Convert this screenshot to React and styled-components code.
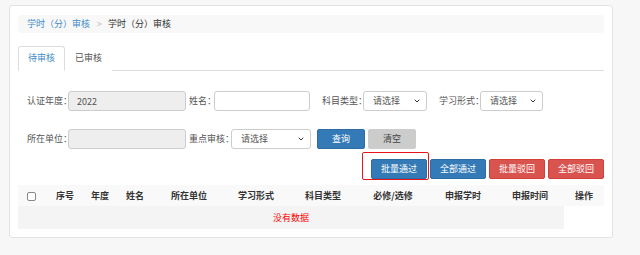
import React from 'react'
import styled, { createGlobalStyle } from 'styled-components'

const GlobalStyle = createGlobalStyle`
  html, body {
    margin: 0;
    padding: 0;
    background: #f7f7f7;
  }
  body {
    font-family: "Noto Sans CJK SC", "Noto Sans", sans-serif;
    font-size: 9px;
    line-height: 1.2;
    color: #555;
  }
`

const Page = styled.div`
  padding: 5px 0 0 9px;
  width: 604px;
`

const Panel = styled.div`
  background: #fff;
  border: 1px solid #e3e3e3;
  border-radius: 3px;
  padding: 9px 8px 8px 8px;
`

const Breadcrumb = styled.div`
  display: flex;
  align-items: center;
  height: 18px;
  padding-left: 9px;
  background: #f8f8f8;
  border-radius: 3px;
`

const Crumb = styled.span`
  color: ${(p) => (p.$active ? '#333' : '#428bca')};
`

const Sep = styled.span`
  color: #bbb;
  margin: 0 6px 0 7px;
`

const Tabs = styled.div`
  display: flex;
  margin-top: 13px;
  border-bottom: 1px solid #ddd;
  height: 24px;
`

const Tab = styled.div`
  display: flex;
  align-items: center;
  padding: 0 9px;
  height: 25px;
  box-sizing: border-box;
  color: ${(p) => (p.$active ? '#428bca' : '#555')};
  background: #fff;
  border: 1px solid ${(p) => (p.$active ? '#ddd' : 'transparent')};
  border-bottom-color: ${(p) => (p.$active ? '#fff' : 'transparent')};
  border-radius: 3px 3px 0 0;
`

const Form = styled.div`
  padding-left: 9px;
  margin-top: 20px;
`

const Row = styled.div`
  display: flex;
  align-items: center;
  height: 20px;
  margin-top: ${(p) => p.$gap || 0}px;
`

const Field = styled.div`
  display: flex;
  align-items: center;
  margin-right: ${(p) => p.$mr || 0}px;
`

const Label = styled.span`
  width: ${(p) => p.$w}px;
  white-space: nowrap;
  color: #555;
`

const Input = styled.input`
  box-sizing: border-box;
  width: ${(p) => p.$w}px;
  height: 20px;
  padding: 0 8px;
  border: 1px solid #ccc;
  border-radius: 3px;
  background: ${(p) => (p.disabled ? '#eee' : '#fff')};
  font: inherit;
  color: #555;
  outline: none;
`

const SelectBox = styled.div`
  position: relative;
  box-sizing: border-box;
  width: ${(p) => p.$w}px;
  height: 20px;
  display: flex;
  align-items: center;
  padding-left: 9px;
  border: 1px solid #ccc;
  border-radius: 3px;
  background: #fff;
  color: #555;
  svg {
    position: absolute;
    right: 6px;
    top: 7px;
  }
`

const Btn = styled.button`
  box-sizing: border-box;
  width: ${(p) => p.$w || 56}px;
  height: 20px;
  padding: 0;
  margin-left: ${(p) => p.$ml || 0}px;
  border: 1px solid ${(p) => p.$border};
  border-radius: 2px;
  background: ${(p) => p.$bg};
  color: ${(p) => p.$color || '#fff'};
  font: inherit;
  cursor: pointer;
`

const ActionBar = styled.div`
  display: flex;
  justify-content: flex-end;
  gap: 3px;
  margin-top: 10px;
`

const Marked = styled.span`
  position: relative;
  display: inline-flex;
  &::after {
    content: '';
    position: absolute;
    left: -9px;
    top: -7px;
    right: -2px;
    bottom: -1px;
    border: 1px solid #e8141a;
    border-radius: 2px;
  }
`

const Table = styled.table`
  margin-top: 6px;
  width: 586px;
  border-collapse: collapse;
  table-layout: fixed;
`

const Th = styled.th`
  height: 21px;
  padding: 0;
  background: #f9f9f9;
  color: #333;
  font-weight: bold;
  text-align: center;
  white-space: nowrap;
  line-height: 11px;
`

const EmptyCell = styled.td`
  height: 23px;
  padding: 0;
  background: #f4f4f4;
  color: #f00;
  text-align: center;
  line-height: 11px;
`

const Check = styled.span`
  display: inline-block;
  width: 7px;
  height: 7px;
  border: 1px solid #888;
  border-radius: 2px;
  vertical-align: middle;
  background: #fff;
`

const Chevron = () => (
  <svg width="6" height="4" viewBox="0 0 6 4">
    <path d="M0.7 0.7 L3 3 L5.3 0.7" fill="none" stroke="#333" strokeWidth="1" />
  </svg>
)

const Select = ({ w }) => (
  <SelectBox $w={w}>
    请选择
    <Chevron />
  </SelectBox>
)

const columns = [
  { w: 26 },
  { w: 42, t: '序号' },
  { w: 28, t: '年度' },
  { w: 42, t: '姓名' },
  { w: 66, t: '所在单位' },
  { w: 68, t: '学习形式' },
  { w: 66, t: '科目类型' },
  { w: 74, t: '必修/选修' },
  { w: 66, t: '申报学时' },
  { w: 68, t: '申报时间' },
  { w: 40, t: '操作' },
]

const App = () => (
  <Page>
    <GlobalStyle />
    <Panel>
      <Breadcrumb>
        <Crumb>学时（分）审核</Crumb>
        <Sep>&gt;</Sep>
        <Crumb $active>学时（分）审核</Crumb>
      </Breadcrumb>
      <Tabs>
        <Tab $active>待审核</Tab>
        <Tab>已审核</Tab>
      </Tabs>
      <Form>
        <Row>
          <Field $mr={3}>
            <Label $w={41}>认证年度：</Label>
            <Input $w={118} disabled defaultValue="2022" />
          </Field>
          <Field $mr={12}>
            <Label $w={25}>姓名：</Label>
            <Input $w={96} />
          </Field>
          <Field $mr={12}>
            <Label $w={41}>科目类型：</Label>
            <Select w={64} />
          </Field>
          <Field>
            <Label $w={41}>学习形式：</Label>
            <Select w={63} />
          </Field>
        </Row>
        <Row $gap={18}>
          <Field $mr={3}>
            <Label $w={41}>所在单位：</Label>
            <Input $w={118} disabled />
          </Field>
          <Field $mr={6}>
            <Label $w={42}>重点审核：</Label>
            <Select w={80} />
          </Field>
          <Btn $w={48} $bg="#337ab7" $border="#2e6da4">查询</Btn>
          <Btn $w={48} $ml={3} $bg="#ccc" $border="#ccc" $color="#444">清空</Btn>
        </Row>
      </Form>
      <ActionBar>
        <Marked>
          <Btn $bg="#337ab7" $border="#2e6da4">批量通过</Btn>
        </Marked>
        <Btn $bg="#337ab7" $border="#2e6da4">全部通过</Btn>
        <Btn $bg="#d9534f" $border="#d43f3a">批量驳回</Btn>
        <Btn $bg="#d9534f" $border="#d43f3a">全部驳回</Btn>
      </ActionBar>
      <Table>
        <colgroup>
          {columns.map((c, i) => (
            <col key={i} style={{ width: c.w }} />
          ))}
        </colgroup>
        <thead>
          <tr>
            {columns.map((c, i) => (
              <Th key={i}>{c.t || <Check />}</Th>
            ))}
          </tr>
        </thead>
        <tbody>
          <tr>
            <EmptyCell colSpan={10}>没有数据</EmptyCell>
          </tr>
        </tbody>
      </Table>
    </Panel>
  </Page>
)

export default App
